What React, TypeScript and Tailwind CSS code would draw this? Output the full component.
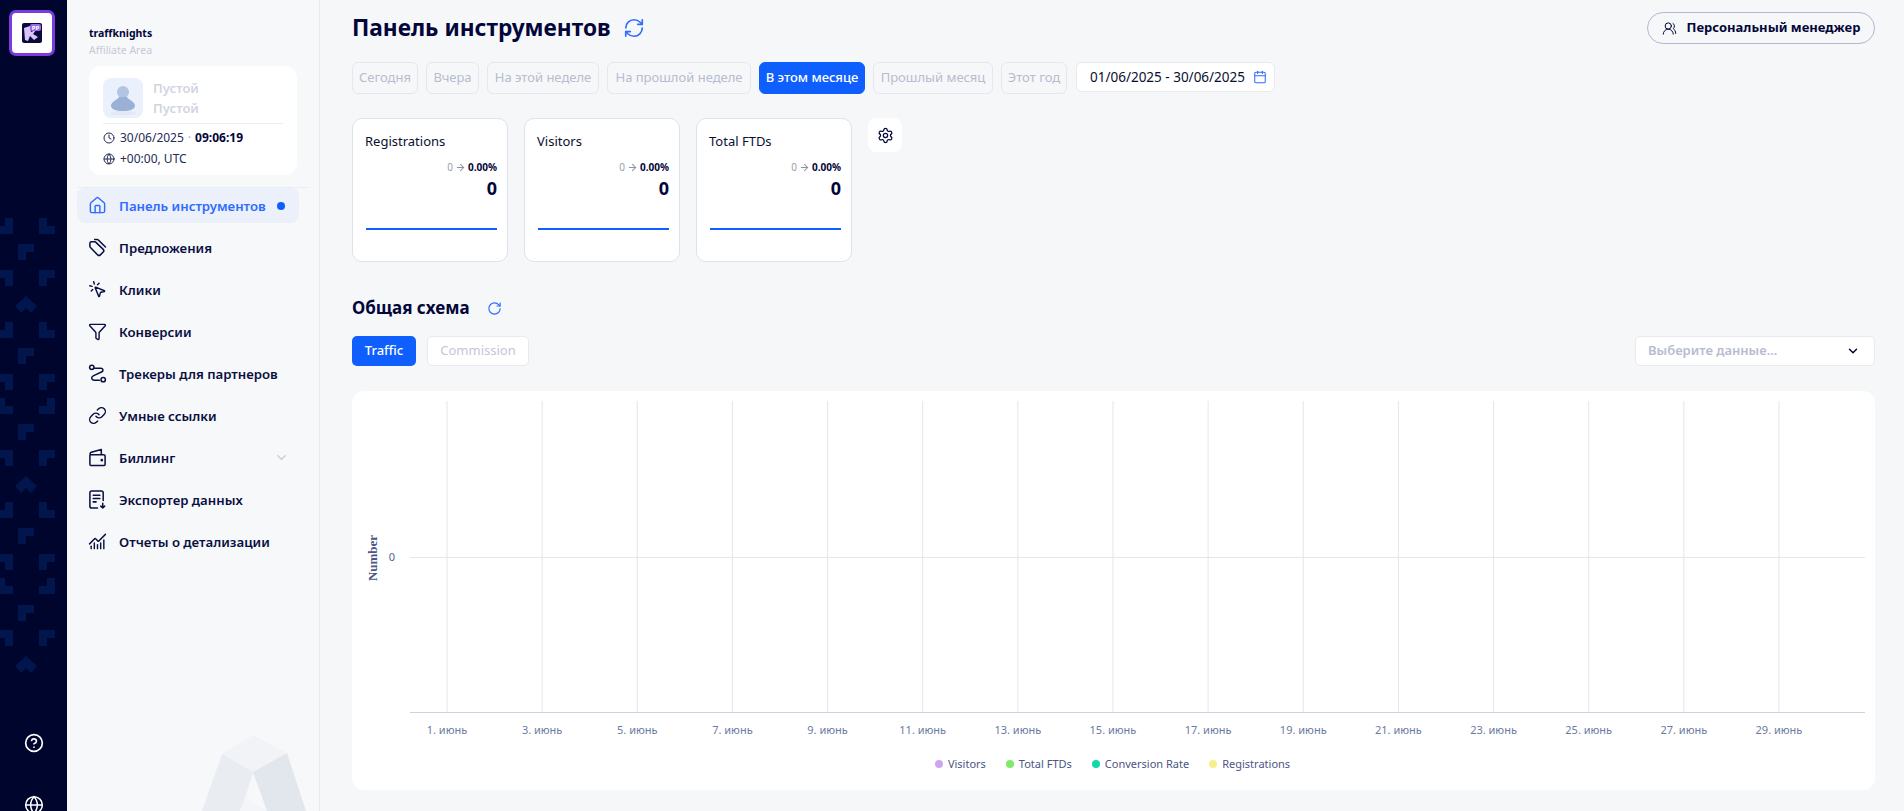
import {
  House, MousePointerClick, Funnel, Link, ChartNoAxesCombined, ArrowRight,
  UsersRound, RefreshCw, RotateCw, Calendar, Settings, CircleHelp, Globe, Clock, ChevronDown,
} from 'lucide-react'

const CELLS: Record<string, string> = {
  a: 'M8 0H16V16H0V8H8Z',
  b: 'M0 0H8V8H16V16H0Z',
  c: 'M0 0H16V8H8V16H0Z',
  d: 'M0 0H16V16H8V8H0Z',
}

// rows of the rail pattern: y, then the shape kinds at left / middle / right
const RAIL_ROWS: [number, string, string, string][] = [
  [218, 'a', '', 'b'], [244, '', 'c', ''], [270, 'd', '', 'c'],
  [322, 'a', '', 'b'], [348, '', 'c', ''], [374, 'd', '', 'c'],
  [398, 'b', '', 'a'], [424, '', 'c', ''], [450, 'd', '', 'c'],
  [502, 'a', '', 'b'], [528, '', 'c', ''], [554, 'd', '', 'c'],
  [578, 'b', '', 'a'], [605, '', 'c', ''], [630, 'd', '', 'c'],
]

function RailPattern() {
  return (
    <svg className="absolute left-0 top-0" width="67" height="811" fill="#01164c">
      {RAIL_ROWS.map(([y, l, m, r]) => (
        <g key={y}>
          {l && <path d={CELLS[l]} transform={`translate(-3 ${y})`} />}
          {m && <path d={CELLS[m]} transform={`translate(18 ${y})`} />}
          {r && <path d={CELLS[r]} transform={`translate(39 ${y})`} />}
        </g>
      ))}
      {[296, 476, 656].map(y => (
        <path key={y} d="M26 0L37 10L31 17L26 12L21 17L15 10Z" transform={`translate(0 ${y})`} />
      ))}
    </svg>
  )
}

function Logo() {
  return (
    <div className="relative z-10 mr-[3px] mt-[10px] flex h-[46px] w-[46px] items-center justify-center rounded-[7px] border-[3px] border-[#7c3ae0] bg-white">
      <svg width="20" height="20" viewBox="0 0 20 20">
        <rect width="20" height="20" rx="2" fill="#0a0a3c" />
        <path d="M2 5L8 3L9 9L14 7L11 11L16 14L12 17L8 13L6 18L3 17Z" fill="#d9c6f7" />
        <rect x="8" y="1" width="11" height="7" rx="2" fill="#9b6be8" />
        <text x="13.5" y="6.6" textAnchor="middle" fontSize="6" fontWeight="700" fill="#fff">PP</text>
      </svg>
    </div>
  )
}

type IconProps = { className?: string; strokeWidth?: number }

function NavSvg({ className, children }: IconProps & { children: React.ReactNode }) {
  return (
    <svg className={className} viewBox="0 0 20 20" fill="none" stroke="currentColor" strokeWidth="1.6" strokeLinecap="round" strokeLinejoin="round">
      {children}
    </svg>
  )
}

function TagIcon({ className }: IconProps) {
  return (
    <NavSvg className={className}>
      <path d="M2 7.500V5.500a1.500 1.500 0 0 1 1.500-1.500H7a2 2 0 0 1 1.400.6l7.600 7.400a2 2 0 0 1 0 2.800l-3 3a2 2 0 0 1-2.800 0L2.600 9.900A3 3 0 0 1 2 7.500Z" />
      <path d="M7 1.500h2.500a2 2 0 0 1 1.400.6l7.500 7.400" />
    </NavSvg>
  )
}

function TrackerIcon({ className }: IconProps) {
  return (
    <NavSvg className={className}>
      <circle cx="4" cy="3.500" r="2.300" />
      <path d="M7 4.500h6.500c2.500 0 3 2.500 1.200 3.700L5.500 12.500c-2.500 1.300-2 4.500.8 4.500H12" />
      <circle cx="16" cy="16.500" r="2.300" />
    </NavSvg>
  )
}

function WalletIcon({ className }: IconProps) {
  return (
    <NavSvg className={className}>
      <path d="M2 7.500V17a1.500 1.500 0 0 0 1.500 1.500h13A1.500 1.500 0 0 0 18 17V8.500A1.500 1.500 0 0 0 16.500 7H3.500C1.800 7 1.800 5 3.500 4.500L14 1.500V7" />
      <circle cx="14.500" cy="12.800" r=".6" fill="currentColor" />
    </NavSvg>
  )
}

function ExportIcon({ className }: IconProps) {
  return (
    <NavSvg className={className}>
      <path d="M10 19H4a2 2 0 0 1-2-2V3a2 2 0 0 1 2-2h10a2 2 0 0 1 2 2v8" />
      <path d="M5.500 5.500h7M5.500 9h7M5.500 12.500h3" />
      <path d="M15.500 14v5M13.500 17l2 2 2-2" />
    </NavSvg>
  )
}

const NAV = [
  { label: 'Панель инструментов', Icon: House, active: true },
  { label: 'Предложения', Icon: TagIcon },
  { label: 'Клики', Icon: MousePointerClick },
  { label: 'Конверсии', Icon: Funnel },
  { label: 'Трекеры для партнеров', Icon: TrackerIcon },
  { label: 'Умные ссылки', Icon: Link },
  { label: 'Биллинг', Icon: WalletIcon, arrow: true },
  { label: 'Экспортер данных', Icon: ExportIcon },
  { label: 'Отчеты о детализации', Icon: ChartNoAxesCombined },
]

function SidePanel() {
  return (
    <aside className="relative flex w-[253px] shrink-0 flex-col overflow-hidden border-r border-[#e4e9f2] bg-[#f7f8fa] px-[10px]">
      <div className="pl-[12px] pt-[26px]">
        <p className="text-[10.5px] font-bold leading-[14px] text-[#02063a]">traffknights</p>
        <p className="mt-[3px] text-[10.5px] leading-[14px] text-[#c6c9d6]">Affiliate Area</p>
      </div>
      <div className="ml-[12px] mt-[9px] h-[109px] w-[208px] rounded-xl bg-white px-[14px] pt-[12px]">
        <div className="flex gap-[10px]">
          <div className="h-[40px] w-[40px] rounded-lg bg-[#eaf1fc]">
            <svg width="40" height="40" viewBox="0 0 40 40">
              <ellipse cx="20" cy="35" rx="13" ry="2.500" fill="#e3e9f4" />
              <circle cx="20" cy="14" r="6" fill="#b3c5e2" />
              <path d="M16 19h8c1 3 8 4 8 9 0 3-5 5-12 5S8 31 8 28c0-5 7-6 8-9Z" fill="#9ab0d6" />
            </svg>
          </div>
          <div className="text-[13px] font-semibold leading-[20px] text-[#d2d5df]">
            <p>Пустой</p>
            <p>Пустой</p>
          </div>
        </div>
        <div className="mt-[5px] w-[180px] border-t border-[#eceef3] pt-[3px] text-[12px] leading-[21px] text-[#262c55]">
          <div className="flex items-center gap-[4px]">
            <Clock className="mr-[1px]" size={12} />
            <span>30/06/2025</span>
            <span className="text-[#a9adc0]">·</span>
            <span className="font-bold text-[#02063a]">09:06:19</span>
          </div>
          <div className="flex items-center gap-[5px]">
            <Globe size={12} />
            <span>+00:00, UTC</span>
          </div>
        </div>
      </div>
      <div className="mt-[12px] border-t border-[#ebedf2]" />
      <nav className="flex flex-col gap-[7px]">
        {NAV.map(({ label, Icon, active, arrow }) => (
          <div
            key={label}
            className={[
              'flex h-[35px] w-[222px] items-center rounded-lg pl-[11px] text-[13.2px] font-semibold',
              active ? 'bg-[#ebf0fa] text-[#2e6bff]' : 'text-[#0a0f42]',
            ].join(' ')}
          >
            <Icon className="h-[19px] w-[19px] shrink-0" strokeWidth={1.8} />
            <span className="ml-[12px] whitespace-nowrap pt-[2px]">{label}</span>
            {active && <span className="ml-auto mr-[14px] h-[8px] w-[8px] rounded-full bg-[#0f5fff]" />}
            {arrow && <ChevronDown className="ml-auto mr-[10px] text-[#c3c7d3]" size={15} />}
          </div>
        ))}
      </nav>
      <svg className="absolute bottom-0 left-[135px]" width="118" height="76" viewBox="0 0 118 76">
        <path d="M20 19L51 0L85 18L51 37Z" fill="#f1f3f7" />
        <path d="M20 19L51 37L43 63L38 76H0Z" fill="#e9ecf1" />
        <path d="M51 37L85 18L104 76H65Z" fill="#e2e6ed" />
        <path d="M43 63L65 76H38Z" fill="#f4f5f8" />
      </svg>
    </aside>
  )
}

const RANGES = [
  { label: 'Сегодня', width: 'w-[66px]' },
  { label: 'Вчера', width: 'w-[53px]' },
  { label: 'На этой неделе', width: 'w-[112px]' },
  { label: 'На прошлой неделе', width: 'w-[144px]' },
  { label: 'В этом месяце', width: 'w-[106px]', active: true },
  { label: 'Прошлый месяц', width: 'w-[120px]' },
  { label: 'Этот год', width: 'w-[66px]' },
]

function StatCard({ title }: { title: string }) {
  return (
    <div className="flex h-[144px] w-[156px] flex-col rounded-[10px] border border-[#dfe2ea] bg-white pl-[12px] pr-[10px] pt-[12px]">
      <p className="text-[13px] leading-[20px] text-[#0a0f30]">{title}</p>
      <div className="mt-[9px] flex items-center justify-end gap-[2px] text-[10px] leading-[14px]">
        <span className="text-[#9a9eab]">0</span>
        <ArrowRight className="text-[#8d91a0]" size={11} strokeWidth={2.2} />
        <span className="font-bold text-[#02063a]">0.00%</span>
      </div>
      <p className="mt-[1px] text-right text-[18px] font-bold leading-[26px] text-[#02063a]">0</p>
      <div className="ml-[1px] mt-[27px] h-[2px] bg-[#0f5fff]" />
    </div>
  )
}

const DAYS = [1, 3, 5, 7, 9, 11, 13, 15, 17, 19, 21, 23, 25, 27, 29]
const LEGEND = [
  { label: 'Visitors', color: 'bg-[#cda6f2]' },
  { label: 'Total FTDs', color: 'bg-[#80e96c]' },
  { label: 'Conversion Rate', color: 'bg-[#14d6aa]' },
  { label: 'Registrations', color: 'bg-[#f7ee8c]' },
]

function Chart() {
  return (
    <div className="mt-[25px] h-[399px] rounded-xl bg-white">
      <svg width="1523" height="350" className="block">
        {DAYS.map((d, i) => {
          const x = 95 + i * 95.14
          return (
            <g key={d}>
              <line x1={x} x2={x} y1="10" y2="321" stroke="#e6e6e6" />
              <text x={x} y="343" textAnchor="middle" fontSize="11" fill="#6c7aa0">{d}. июнь</text>
            </g>
          )
        })}
        <line x1="58" x2="1513" y1="166.5" y2="166.5" stroke="#e6e6e6" />
        <line x1="58" x2="1513" y1="321.5" y2="321.5" stroke="#ccd3e0" />
        <text x="40" y="170" textAnchor="middle" fontSize="11" fill="#54638f">0</text>
        <text
          transform="translate(25 167) rotate(-90)"
          textAnchor="middle"
          fontSize="13"
          fontWeight="700"
          fontFamily="'Liberation Serif', serif"
          fill="#4c5583"
        >
          Number
        </text>
      </svg>
      <div className="mt-[13px] flex h-[20px] items-center justify-center gap-[20px] pr-[2px] text-[11px] text-[#4c5583]">
        {LEGEND.map(l => (
          <div key={l.label} className="flex items-center gap-[5px]">
            <span className={['h-[8px] w-[8px] rounded-full', l.color].join(' ')} />
            <span>{l.label}</span>
          </div>
        ))}
      </div>
    </div>
  )
}

export default function App() {
  return (
    <div className="flex h-screen overflow-hidden bg-[#f6f7f9] font-['Noto_Sans',sans-serif]">
      <div className="relative flex w-[67px] shrink-0 flex-col items-center bg-[#00052e] text-white">
        <RailPattern />
        <Logo />
        <CircleHelp className="relative mt-auto" size={20} strokeWidth={2} />
        <Globe className="relative mb-[-4px] mt-[42px]" size={20} strokeWidth={1.8} />
      </div>
      <SidePanel />
      <main className="min-w-0 flex-1 pl-[32px] pr-[29px] pt-[12px]">
        <div className="flex h-[32px] items-center justify-between">
          <div className="flex items-center gap-[12px]">
            <h1 className="text-[22.7px] font-bold leading-[32px] text-[#02063a]">Панель инструментов</h1>
            <RefreshCw className="text-[#2e6bff]" size={22} strokeWidth={1.8} />
          </div>
          <button className="flex h-[32px] w-[228px] items-center justify-center gap-[10px] rounded-full border border-[#b3b7d0] text-[13px] font-bold text-[#02063a]">
            <UsersRound size={15} strokeWidth={1.6} />
            Персональный менеджер
          </button>
        </div>

        <div className="mt-[18px] flex items-start gap-[8px]">
          {RANGES.map(r => (
            <button
              key={r.label}
              className={[
                'h-[32px] whitespace-nowrap rounded-md border text-[13px]',
                r.width,
                r.active
                  ? 'border-[#0f5fff] bg-[#0f5fff] font-medium text-white'
                  : 'border-[#e5e7ec] text-[#b7bccf]',
              ].join(' ')}
            >
              {r.label}
            </button>
          ))}
          <div className="ml-[1px] flex h-[30px] w-[199px] items-center justify-end gap-[8px] rounded-md border border-[#e8eaef] bg-white pr-[7px] text-[13.5px] text-[#0a0f30]">
            01/06/2025 - 30/06/2025
            <Calendar className="text-[#2e6bff]" size={14} strokeWidth={1.8} />
          </div>
        </div>

        <div className="mt-[24px] flex items-start gap-[16px]">
          <StatCard title="Registrations" />
          <StatCard title="Visitors" />
          <StatCard title="Total FTDs" />
          <div className="flex h-[34px] w-[34px] items-center justify-center rounded-lg bg-white text-[#02063a]">
            <Settings size={17} strokeWidth={1.8} />
          </div>
        </div>

        <div className="mt-[34px] flex h-[24px] items-center gap-[17px]">
          <h2 className="text-[17px] font-bold text-[#02063a]">Общая схема</h2>
          <RotateCw className="text-[#2e6bff]" size={15} strokeWidth={1.8} />
        </div>

        <div className="mt-[16px] flex items-center gap-[11px]">
          <button className="h-[30px] w-[64px] rounded-[5px] bg-[#0f5fff] text-[13px] font-medium text-white">Traffic</button>
          <button className="h-[30px] w-[102px] rounded-[5px] border border-[#e8eaef] bg-white text-[13px] text-[#c3c7d6]">Commission</button>
          <div className="ml-auto flex h-[30px] w-[240px] items-center justify-between rounded-[5px] border border-[#e8eaef] bg-white pl-[12px] pr-[14px] text-[13px] font-semibold text-[#b7bccf]">
            Выберите данные...
            <ChevronDown className="text-[#02063a]" size={14} strokeWidth={2.5} />
          </div>
        </div>

        <Chart />
      </main>
    </div>
  )
}
